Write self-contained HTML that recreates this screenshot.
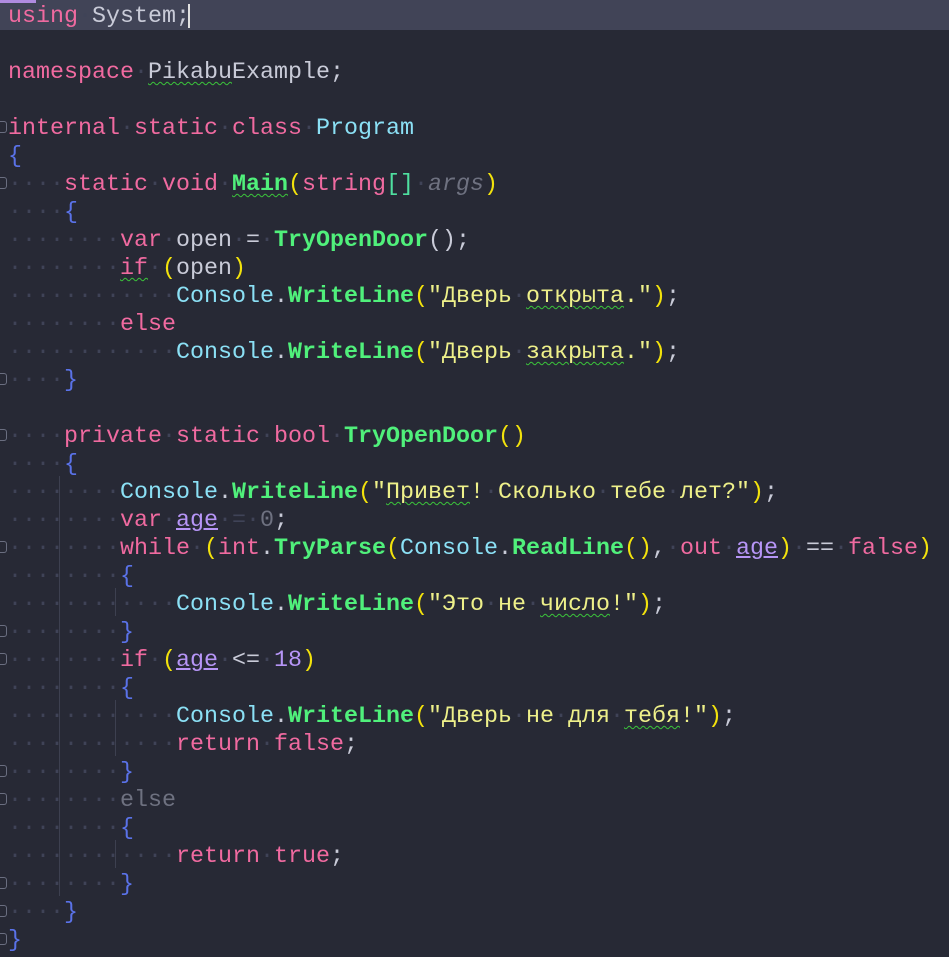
<!DOCTYPE html>
<html><head><meta charset="utf-8"><style>
body{margin:0;width:949px;height:957px;background:#272935;overflow:hidden;position:relative;font-family:"Liberation Mono",monospace;}
.cur{position:absolute;left:0;top:0;width:949px;height:30px;background:#414457;}
.bar{position:absolute;left:0;top:0;width:36px;height:3px;background:#b08be0;}
.caret{position:absolute;left:188px;top:4px;width:2px;height:24px;background:#e0e0e0;}
.l{position:absolute;left:8px;height:28px;line-height:28px;font-size:23.33px;white-space:pre;color:#c9cbd8;transform:translateY(2px);}
.d{color:#3f4357}
.k{color:#f06aa0}.t{color:#8be0f5}.f{color:#50f07b;font-weight:bold}.s{color:#eef08a}
.y{color:#f2e20c}.b{color:#5a72e8}.p{color:#b695f6}.g{color:#6e7180}.gr{color:#4fe0a0}
.u{text-decoration:underline;text-decoration-color:#b695f6}
.sq{text-decoration:underline wavy #3bc43b;text-decoration-thickness:1px;text-underline-offset:3px}
.guide{position:absolute;width:1px;background:#3d4050;}
.fold{position:absolute;left:0;width:6px;height:10px;border:1px solid #6a6e80;border-left:none;border-radius:0 3px 3px 0;}
</style></head><body>
<div class="cur"></div><div class="bar"></div><div class="caret"></div>
<div class="guide" style="left:59px;top:476px;height:420px"></div>
<div class="guide" style="left:115px;top:588px;height:28px"></div>
<div class="guide" style="left:115px;top:700px;height:56px"></div>
<div class="guide" style="left:115px;top:840px;height:28px"></div>
<div class="fold" style="top:121px"></div>
<div class="fold" style="top:177px"></div>
<div class="fold" style="top:373px"></div>
<div class="fold" style="top:429px"></div>
<div class="fold" style="top:541px"></div>
<div class="fold" style="top:625px"></div>
<div class="fold" style="top:653px"></div>
<div class="fold" style="top:765px"></div>
<div class="fold" style="top:793px"></div>
<div class="fold" style="top:877px"></div>
<div class="fold" style="top:905px"></div>
<div class="fold" style="top:933px"></div>

<div class="l" style="top:1px"><span class="k">using</span><span class="d">·</span>System;</div>
<div class="l" style="top:57px"><span class="k">namespace</span><span class="d">·</span><span class="sq">Pikabu</span>Example;</div>
<div class="l" style="top:113px"><span class="k">internal</span><span class="d">·</span><span class="k">static</span><span class="d">·</span><span class="k">class</span><span class="d">·</span><span class="t">Program</span></div>
<div class="l" style="top:141px"><span class="b">{</span></div>
<div class="l" style="top:169px"><span class="d">····</span><span class="k">static</span><span class="d">·</span><span class="k">void</span><span class="d">·</span><span class="f sq">Main</span><span class="y">(</span><span class="k">string</span><span class="gr">[]</span><span class="d">·</span><span class="g"><i>args</i></span><span class="y">)</span></div>
<div class="l" style="top:197px"><span class="d">····</span><span class="b">{</span></div>
<div class="l" style="top:225px"><span class="d">········</span><span class="k">var</span><span class="d">·</span>open<span class="d">·</span>=<span class="d">·</span><span class="f">TryOpenDoor</span>();</div>
<div class="l" style="top:253px"><span class="d">········</span><span class="k sq">if</span><span class="d">·</span><span class="y">(</span>open<span class="y">)</span></div>
<div class="l" style="top:281px"><span class="d">············</span><span class="t">Console</span>.<span class="f">WriteLine</span><span class="y">(</span><span class="s">"Дверь<span class="d">·</span><span class="sq">открыта</span>."</span><span class="y">)</span>;</div>
<div class="l" style="top:309px"><span class="d">········</span><span class="k">else</span></div>
<div class="l" style="top:337px"><span class="d">············</span><span class="t">Console</span>.<span class="f">WriteLine</span><span class="y">(</span><span class="s">"Дверь<span class="d">·</span><span class="sq">закрыта</span>."</span><span class="y">)</span>;</div>
<div class="l" style="top:365px"><span class="d">····</span><span class="b">}</span></div>
<div class="l" style="top:421px"><span class="d">····</span><span class="k">private</span><span class="d">·</span><span class="k">static</span><span class="d">·</span><span class="k">bool</span><span class="d">·</span><span class="f">TryOpenDoor</span><span class="y">()</span></div>
<div class="l" style="top:449px"><span class="d">····</span><span class="b">{</span></div>
<div class="l" style="top:477px"><span class="d">········</span><span class="t">Console</span>.<span class="f">WriteLine</span><span class="y">(</span><span class="s">"<span class="sq">Привет</span>!<span class="d">·</span>Сколько<span class="d">·</span>тебе<span class="d">·</span>лет?"</span><span class="y">)</span>;</div>
<div class="l" style="top:505px"><span class="d">········</span><span class="k">var</span><span class="d">·</span><span class="p u">age</span><span class="d">·=·</span><span class="g">0</span>;</div>
<div class="l" style="top:533px"><span class="d">········</span><span class="k">while</span><span class="d">·</span><span class="y">(</span><span class="k">int</span>.<span class="f">TryParse</span><span class="y">(</span><span class="t">Console</span>.<span class="f">ReadLine</span><span class="y">()</span>,<span class="d">·</span><span class="k">out</span><span class="d">·</span><span class="p u">age</span><span class="y">)</span><span class="d">·</span>==<span class="d">·</span><span class="k">false</span><span class="y">)</span></div>
<div class="l" style="top:561px"><span class="d">········</span><span class="b">{</span></div>
<div class="l" style="top:589px"><span class="d">············</span><span class="t">Console</span>.<span class="f">WriteLine</span><span class="y">(</span><span class="s">"Это<span class="d">·</span>не<span class="d">·</span><span class="sq">число</span>!"</span><span class="y">)</span>;</div>
<div class="l" style="top:617px"><span class="d">········</span><span class="b">}</span></div>
<div class="l" style="top:645px"><span class="d">········</span><span class="k">if</span><span class="d">·</span><span class="y">(</span><span class="p u">age</span><span class="d">·</span>&lt;=<span class="d">·</span><span class="p">18</span><span class="y">)</span></div>
<div class="l" style="top:673px"><span class="d">········</span><span class="b">{</span></div>
<div class="l" style="top:701px"><span class="d">············</span><span class="t">Console</span>.<span class="f">WriteLine</span><span class="y">(</span><span class="s">"Дверь<span class="d">·</span>не<span class="d">·</span>для<span class="d">·</span><span class="sq">тебя</span>!"</span><span class="y">)</span>;</div>
<div class="l" style="top:729px"><span class="d">············</span><span class="k">return</span><span class="d">·</span><span class="k">false</span>;</div>
<div class="l" style="top:757px"><span class="d">········</span><span class="b">}</span></div>
<div class="l" style="top:785px"><span class="d">········</span><span class="g">else</span></div>
<div class="l" style="top:813px"><span class="d">········</span><span class="b">{</span></div>
<div class="l" style="top:841px"><span class="d">············</span><span class="k">return</span><span class="d">·</span><span class="k">true</span>;</div>
<div class="l" style="top:869px"><span class="d">········</span><span class="b">}</span></div>
<div class="l" style="top:897px"><span class="d">····</span><span class="b">}</span></div>
<div class="l" style="top:925px"><span class="b">}</span></div>
</body></html>
